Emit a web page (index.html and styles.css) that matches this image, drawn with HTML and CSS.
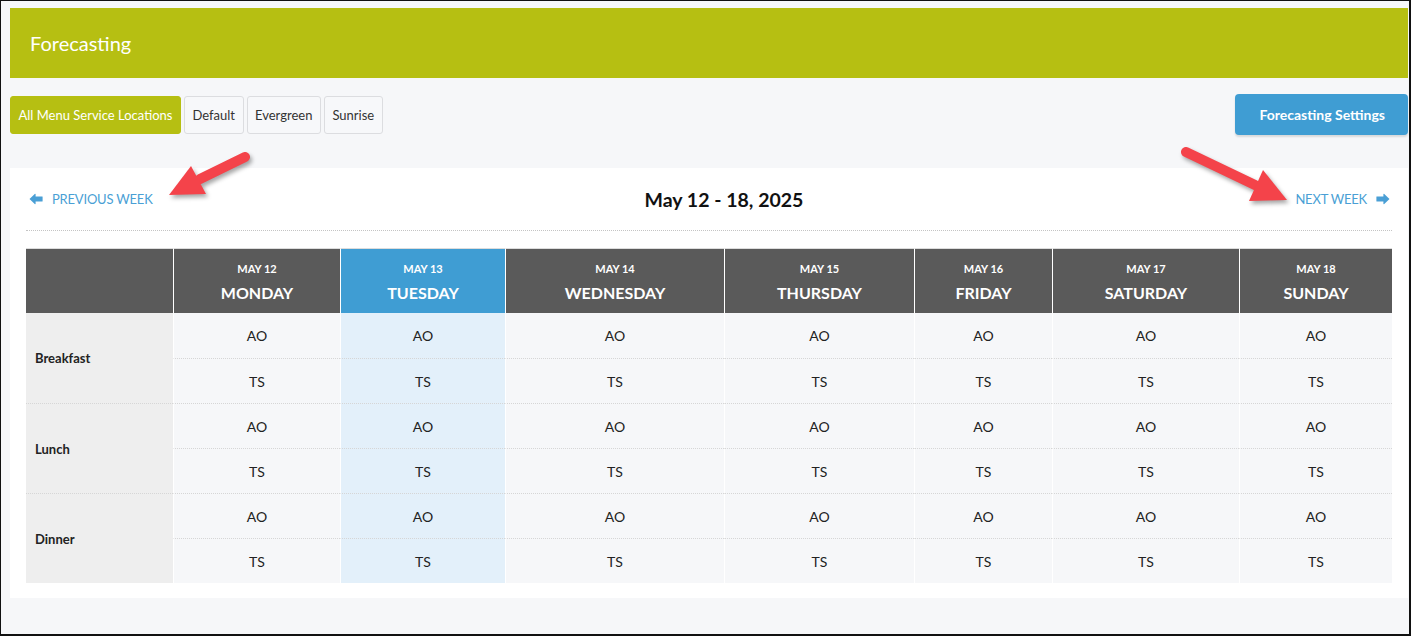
FILE: index.html
```html
<!DOCTYPE html>
<html lang="en">
<head>
    <meta charset="UTF-8">
    <title>Forecasting</title>
    <link rel="stylesheet" href="styles.css">
</head>
<body>
    <div class="frame">
        <div class="page-head">Forecasting</div>

        <div class="toolbar">
            <div class="locations">
                <span class="loc active">All Menu Service Locations</span>
                <span class="loc">Default</span>
                <span class="loc">Evergreen</span>
                <span class="loc">Sunrise</span>
            </div>
            <span class="settings-btn">Forecasting Settings</span>
        </div>

        <div class="card">
            <div class="week-nav">
                <a class="week-link">
                    <svg class="nav-arrow" viewBox="0 0 14 12"><path d="M0.5 6 L6 0.8 L6.6 1 L6.6 3.6 L13.4 3.6 L13.6 3.8 L13.6 8.2 L13.4 8.4 L6.6 8.4 L6.6 11 L6 11.2 Z"/></svg>
                    PREVIOUS WEEK
                </a>
                <div class="week-title">May 12 - 18, 2025</div>
                <a class="week-link">
                    NEXT WEEK
                    <svg class="nav-arrow" viewBox="0 0 14 12"><path d="M13.5 6 L8 0.8 L7.4 1 L7.4 3.6 L0.6 3.6 L0.4 3.8 L0.4 8.2 L0.6 8.4 L7.4 8.4 L7.4 11 L8 11.2 Z"/></svg>
                </a>
            </div>

            <table class="forecast">
                <colgroup>
                    <col class="c-label">
                    <col class="c-mon">
                    <col class="c-tue">
                    <col class="c-wed">
                    <col class="c-thu">
                    <col class="c-fri">
                    <col class="c-sat">
                    <col class="c-sun">
                </colgroup>
                <thead>
                    <tr>
                        <th></th>
                        <th><span class="d">MAY 12</span><span class="w">MONDAY</span></th>
                        <th class="today"><span class="d">MAY 13</span><span class="w">TUESDAY</span></th>
                        <th><span class="d">MAY 14</span><span class="w">WEDNESDAY</span></th>
                        <th><span class="d">MAY 15</span><span class="w">THURSDAY</span></th>
                        <th><span class="d">MAY 16</span><span class="w">FRIDAY</span></th>
                        <th><span class="d">MAY 17</span><span class="w">SATURDAY</span></th>
                        <th><span class="d">MAY 18</span><span class="w">SUNDAY</span></th>
                    </tr>
                </thead>
                <tbody id="rows"></tbody>
            </table>
        </div>
    </div>

    <svg class="annot" width="1414" height="637" viewBox="0 0 1414 637">
        <g class="red-arrow">
            <line x1="245" y1="157" x2="200" y2="179"/>
            <polygon points="169,195 191,166 206,194"/>
        </g>
        <g class="red-arrow">
            <line x1="1186" y1="152" x2="1255" y2="185"/>
            <polygon points="1287,200 1263,170 1249,201"/>
        </g>
    </svg>

    <script>
        // строки таблицы: 3 приема пищи x 2 строки (AO / TS)
        var meals = ['Breakfast', 'Lunch', 'Dinner'];
        var codes = ['AO', 'TS'];
        var tbody = document.getElementById('rows');

        for (var m = 0; m < meals.length; m++) {
            for (var c = 0; c < codes.length; c++) {
                var tr = document.createElement('tr');
                if (c == 0) {
                    var label = document.createElement('td');
                    label.className = 'meal';
                    label.rowSpan = 2;
                    label.textContent = meals[m];
                    tr.appendChild(label);
                }
                for (var day = 0; day < 7; day++) {
                    var td = document.createElement('td');
                    td.className = day == 1 ? 'cell today' : 'cell';
                    td.textContent = codes[c];
                    tr.appendChild(td);
                }
                if (m > 0 || c > 0) {
                    tr.className = 'sep';
                }
                tbody.appendChild(tr);
            }
        }
    </script>
</body>
</html>
```
FILE: styles.css
```css
body {
    margin: 0;
    background: #fff;
    font-family: Lato, "Open Sans", sans-serif;
    color: #222;
}

.frame {
    width: 1411px; height: 636px;
    box-sizing: border-box;
    border: solid #111;
    border-width: 1px 2px 2px 1px;
    padding: 7px 1px 0 9px;
    background: #f6f7f9;
}

.page-head {
    display: flex;
    align-items: center;
    height: 70px;
    padding-left: 20px;
    background: #b6bf12;
    color: #fff;
    font-size: 20px;
}

.toolbar {
    display: flex;
    justify-content: space-between;
    align-items: center;
    height: 41px;
    margin-top: 16px;
}
    .locations {
        display: flex;
        gap: 3px;
    }
        .loc {
            display: flex;
            align-items: center;
            height: 38px;
            padding: 0 7.5px;
            box-sizing: border-box;
            border: 1px solid #dcdde0;
            border-radius: 3px;
            background: #f7f8fa;
            font-size: 13px;
            color: #333;
        }
        .loc.active {
            border-color: #b6bf12;
            background: #b6bf12;
            color: #fff;
        }

    .settings-btn {
        display: flex;
        align-items: center;
        height: 41px;
        padding: 0 23px 0 24px;
        box-sizing: border-box;
        border-radius: 4px;
        background: #3f9dd3;
        box-shadow: 0 2px 2px rgba(0, 0, 0, 0.12);
        color: #fff;
        font-size: 14px;
        font-weight: bold;
    }

.card {
    margin-top: 33px;
    padding: 0 16px 15px 16px;
    background: #fff;
}

.week-nav {
    display: flex;
    justify-content: space-between;
    align-items: center;
    height: 62px;
    padding: 0 2px 0 3px;
    border-bottom: 1px dotted #c4c4c4;
}
    .week-link {
        display: flex;
        align-items: center;
        gap: 9px;
        color: #4a9fd5;
        font-size: 13px;
        letter-spacing: -0.2px;
    }
        .nav-arrow {
            width: 14px; height: 12px;
            fill: #4a9fd5;
        }
    .week-title {
        font-size: 19.5px;
        font-weight: bold;
        color: #111;
    }

.forecast {
    width: 1366px;
    margin-top: 17px;
    table-layout: fixed;
    border-collapse: separate;
    border-spacing: 0;
}
    .c-label { width: 147px; }
    .c-mon { width: 167px; }
    .c-tue { width: 165px; }
    .c-wed { width: 219px; }
    .c-thu { width: 190px; }
    .c-fri { width: 138px; }
    .c-sat { width: 187px; }
    .c-sun { width: 153px; }

    .forecast th {
        height: 64px;
        padding: 0;
        border-top: 1px solid #dcdcdc;
        background: #5a5a5a;
        color: #fff;
        text-align: center;
        vertical-align: middle;
    }
    .forecast th + th {
        border-left: 1px solid #fff;
    }
    .forecast th.today {
        background: #3f9dd3;
    }
        .forecast th .d {
            display: block;
            padding-top: 4px;
            font-size: 11px;
            line-height: 16px;
        }
        .forecast th .w {
            display: block;
            margin-top: 4px;
            font-size: 16px;
            line-height: 24px;
        }

    .forecast td {
        height: 45px;
        padding: 0;
        box-sizing: border-box;
        font-size: 14px;
        vertical-align: middle;
    }
    .forecast tr.sep td {
        border-top: 1px dotted #d6d6d6;
    }
    .forecast td.meal {
        padding-left: 9px;
        background: #eeeeee;
        font-size: 13px;
        font-weight: bold;
        color: #222;
    }
    .forecast td.cell {
        border-left: 1px solid #fff;
        background: #f6f7f9;
        text-align: center;
    }
    .forecast td.cell.today {
        background: #e3f0fa;
    }

.annot {
    position: absolute;
    top: 0; left: 0;
    pointer-events: none;
}
    .red-arrow {
        filter: drop-shadow(2px 3px 2px rgba(0, 0, 0, 0.35));
    }
        .red-arrow line {
            stroke: #f4434a;
            stroke-width: 10;
            stroke-linecap: round;
        }
        .red-arrow polygon {
            fill: #f4434a;
        }
```
